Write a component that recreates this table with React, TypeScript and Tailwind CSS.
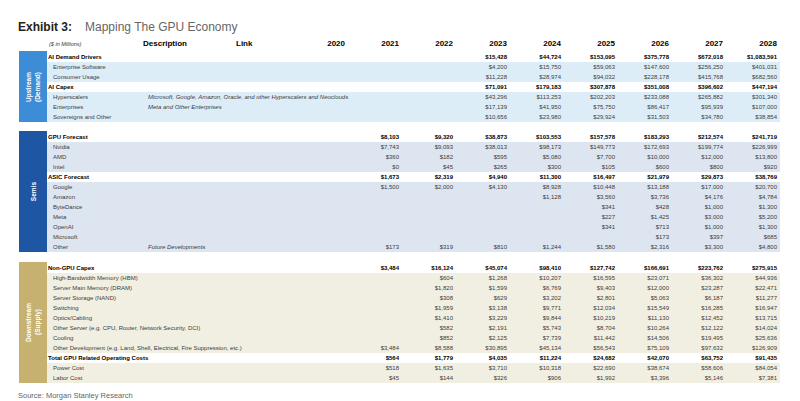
import * as React from 'react';
import { clsx as cn } from 'clsx';

type RowData = {
  name: string;
  desc?: string;
  bold?: boolean;
  vals: string[];
};

const YEARS = ['2020', '2021', '2022', '2023', '2024', '2025', '2026', '2027', '2028'];

// pad the leading empty year columns
const at = (start: number, vals: string[]) => [...Array(start).fill(''), ...vals];

const UPSTREAM: RowData[] = [
  { name: 'AI Demand Drivers', bold: true, vals: at(3, ['$15,428', '$44,724', '$153,095', '$375,778', '$672,018', '$1,083,591']) },
  { name: 'Enterprise Software', vals: at(3, ['$4,200', '$15,750', '$59,063', '$147,600', '$256,250', '$401,031']) },
  { name: 'Consumer Usage', vals: at(3, ['$11,228', '$28,974', '$94,032', '$228,178', '$415,768', '$682,560']) },
  { name: 'AI Capex', bold: true, vals: at(3, ['$71,091', '$179,183', '$307,878', '$351,008', '$396,602', '$447,194']) },
  {
    name: 'Hyperscalers',
    desc: 'Microsoft, Google, Amazon, Oracle, and other Hyperscalers and Neoclouds',
    vals: at(3, ['$43,296', '$113,253', '$202,203', '$233,088', '$265,882', '$301,340']),
  },
  { name: 'Enterprises', desc: 'Meta and Other Enterprises', vals: at(3, ['$17,139', '$41,950', '$75,750', '$86,417', '$95,939', '$107,000']) },
  { name: 'Sovereigns and Other', vals: at(3, ['$10,656', '$23,980', '$29,924', '$31,503', '$34,780', '$38,854']) },
];

const SEMIS: RowData[] = [
  { name: 'GPU Forecast', bold: true, vals: at(1, ['$8,103', '$9,320', '$38,873', '$103,553', '$157,578', '$183,293', '$212,574', '$241,719']) },
  { name: 'Nvidia', vals: at(1, ['$7,743', '$9,093', '$38,013', '$98,173', '$149,773', '$172,693', '$199,774', '$226,999']) },
  { name: 'AMD', vals: at(1, ['$360', '$182', '$595', '$5,080', '$7,700', '$10,000', '$12,000', '$13,800']) },
  { name: 'Intel', vals: at(1, ['$0', '$45', '$265', '$300', '$105', '$600', '$800', '$920']) },
  { name: 'ASIC Forecast', bold: true, vals: at(1, ['$1,673', '$2,319', '$4,940', '$11,300', '$16,497', '$21,979', '$29,873', '$38,769']) },
  { name: 'Google', vals: at(1, ['$1,500', '$2,000', '$4,130', '$8,928', '$10,448', '$13,188', '$17,000', '$20,700']) },
  { name: 'Amazon', vals: at(4, ['$1,128', '$3,560', '$3,736', '$4,176', '$4,784']) },
  { name: 'ByteDance', vals: at(5, ['$341', '$428', '$1,000', '$1,300']) },
  { name: 'Meta', vals: at(5, ['$227', '$1,425', '$3,000', '$5,200']) },
  { name: 'OpenAI', vals: at(5, ['$341', '$713', '$1,000', '$1,300']) },
  { name: 'Microsoft', vals: at(6, ['$173', '$397', '$685']) },
  {
    name: 'Other',
    desc: 'Future Developments',
    vals: at(1, ['$173', '$319', '$810', '$1,244', '$1,580', '$2,316', '$3,300', '$4,800']),
  },
];

const DOWNSTREAM: RowData[] = [
  { name: 'Non-GPU Capex', bold: true, vals: at(1, ['$3,484', '$16,124', '$45,074', '$98,410', '$127,742', '$166,691', '$223,762', '$275,915']) },
  { name: 'High-Bandwidth Memory (HBM)', vals: at(2, ['$604', '$1,268', '$10,207', '$16,595', '$23,071', '$36,302', '$44,936']) },
  { name: 'Server Main Memory (DRAM)', vals: at(2, ['$1,820', '$1,599', '$6,769', '$9,403', '$12,000', '$23,287', '$22,471']) },
  { name: 'Server Storage (NAND)', vals: at(2, ['$308', '$629', '$3,202', '$2,801', '$5,063', '$6,187', '$11,277']) },
  { name: 'Switching', vals: at(2, ['$1,959', '$3,138', '$9,771', '$12,034', '$15,549', '$16,285', '$16,947']) },
  { name: 'Optics/Cabling', vals: at(2, ['$1,410', '$3,229', '$9,844', '$10,219', '$11,130', '$12,452', '$13,715']) },
  {
    name: 'Other Server (e.g. CPU, Router, Network Security, DCI)',
    vals: at(2, ['$582', '$2,191', '$5,743', '$8,704', '$10,264', '$12,122', '$14,024']),
  },
  { name: 'Cooling', vals: at(2, ['$852', '$2,125', '$7,739', '$11,442', '$14,506', '$19,495', '$25,636']) },
  {
    name: 'Other Development (e.g. Land, Shell, Electrical, Fire Suppression, etc.)',
    vals: at(1, ['$3,484', '$8,588', '$30,895', '$45,134', '$56,543', '$75,109', '$97,632', '$126,909']),
  },
  {
    name: 'Total GPU Related Operating Costs',
    bold: true,
    vals: at(1, ['$564', '$1,779', '$4,035', '$11,224', '$24,682', '$42,070', '$63,752', '$91,435']),
  },
  { name: 'Power Cost', vals: at(1, ['$518', '$1,635', '$3,710', '$10,318', '$22,690', '$38,674', '$58,606', '$84,054']) },
  { name: 'Labor Cost', vals: at(1, ['$45', '$144', '$326', '$906', '$1,992', '$3,396', '$5,146', '$7,381']) },
];

const GRID = 'grid grid-cols-[101px_88px_55px_repeat(9,54px)] pr-[3px]';

function Row({ row, shade }: { row: RowData; shade: string }) {
  return (
    <div
      className={cn(
        GRID,
        'h-[10px] items-center text-[6px] leading-[10px]',
        row.bold ? 'bg-white font-bold text-black' : cn(shade, 'text-[#3c3c3c]'),
      )}
    >
      <div className={cn('whitespace-nowrap', row.bold ? 'pl-[1px]' : 'pl-[6px]')}>{row.name}</div>
      <div className="whitespace-nowrap italic">{row.desc}</div>
      <div />
      {row.vals.map((v, i) => (
        <div key={i} className="text-right whitespace-nowrap">
          {v}
        </div>
      ))}
      {Array.from({ length: 9 - row.vals.length }).map((_, i) => (
        <div key={`e${i}`} />
      ))}
    </div>
  );
}

function Section({
  lines,
  box,
  shade,
  rows,
  className,
}: {
  lines: string[];
  box: string;
  shade: string;
  rows: RowData[];
  className?: string;
}) {
  return (
    <div className={cn('flex', className)}>
      <div className={cn('flex w-[28px] items-center justify-center', box)}>
        <div className="rotate-180 text-center text-[6.5px] leading-[9px] font-bold text-white [writing-mode:vertical-rl]">
          {lines.map((l) => (
            <div key={l}>{l}</div>
          ))}
        </div>
      </div>
      <div className="w-[733px] pt-[1px]">
        {rows.map((r) => (
          <Row key={r.name} row={r} shade={shade} />
        ))}
      </div>
    </div>
  );
}

export default function App() {
  return (
    <div className="h-[401px] w-[800px] overflow-hidden bg-white pt-[20px] pl-[18px] font-['Liberation_Sans',Arial,sans-serif]">
      <div className="flex items-baseline leading-[14px]">
        <span className="inline-block w-[67px] text-[12px] font-bold text-[#222]">Exhibit 3:</span>
        <span className="text-[12px] text-[#666]">Mapping The GPU Economy</span>
      </div>

      <div className={cn(GRID, 'mt-[5px] ml-[29px] h-[10px] w-[733px] items-center text-[8px] leading-[10px] font-bold text-black')}>
        <div className="pl-[2px] text-[5.5px] font-normal italic text-[#333]">($ in Millions)</div>
        <div className="-ml-[5px]">Description</div>
        <div>Link</div>
        {YEARS.map((y) => (
          <div key={y} className="text-right">
            {y}
          </div>
        ))}
      </div>

      <div className="pl-[1px]">
        <Section
          className="mt-[2px]"
          lines={['Upstream', '(Demand)']}
          box="bg-[#3d8dd6]"
          shade="bg-[#ddedf8]"
          rows={UPSTREAM}
        />
        <Section className="mt-[9px]" lines={['Semis']} box="bg-[#1f56a3]" shade="bg-[#dce5f0]" rows={SEMIS} />
        <Section
          className="mt-[10px]"
          lines={['Downstream', '(Supply)']}
          box="bg-[#c6b171]"
          shade="bg-[#f1efe1]"
          rows={DOWNSTREAM}
        />
      </div>

      <div className="mt-[8px] text-[7.5px] leading-[10px] text-[#666]">Source: Morgan Stanley Research</div>
    </div>
  );
}
